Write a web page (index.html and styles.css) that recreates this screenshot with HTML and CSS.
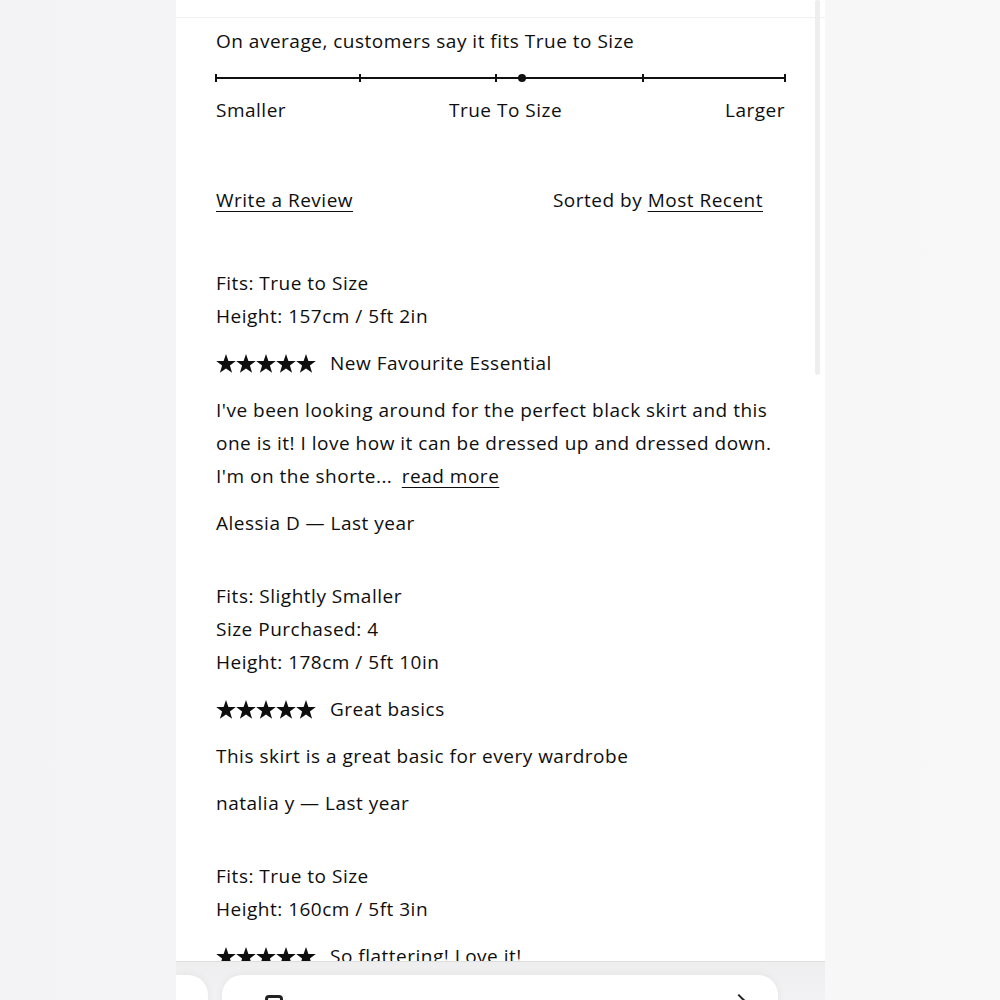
FILE: index.html
```html
<!DOCTYPE html>
<html lang="en">
<head>
<meta charset="utf-8">
<title>Reviews</title>
<link rel="stylesheet" href="styles.css">
</head>
<body>
<svg width="0" height="0" class="defs" aria-hidden="true">
  <defs>
    <symbol id="star" viewBox="0 0 20 19">
      <polygon points="10,0 12.4,6.9 19.8,7 13.9,11.5 16.1,18.7 10,14.4 3.9,18.7 6.1,11.5 0.2,7 7.6,6.9"/>
    </symbol>
  </defs>
</svg>
<div class="page">
  <main class="sheet">
    <div class="sheet-top"></div>
    <div class="sheet-body">
      <section class="fit-summary">
        <p class="line">On average, customers say it fits True to Size</p>
        <div class="scale">
          <div class="scale-track"></div>
          <span class="tick" style="left:0%"></span>
          <span class="tick" style="left:25.3%"></span>
          <span class="tick" style="left:49.2%"></span>
          <span class="tick" style="left:75%"></span>
          <span class="tick" style="left:100%"></span>
          <span class="marker" style="left:53.8%"></span>
        </div>
        <div class="scale-labels">
          <span>Smaller</span>
          <span class="mid">True To Size</span>
          <span>Larger</span>
        </div>
      </section>

      <div class="actions">
        <a class="link" href="#">Write a Review</a>
        <span class="sort">Sorted by <a class="link" href="#">Most Recent</a></span>
      </div>

      <article class="review">
        <div class="meta">
          <p class="line">Fits: True to Size</p>
          <p class="line">Height: 157cm / 5ft 2in</p>
        </div>
        <div class="headline">
          <span class="stars"><svg><use href="#star"/></svg><svg><use href="#star"/></svg><svg><use href="#star"/></svg><svg><use href="#star"/></svg><svg><use href="#star"/></svg></span>
          <span>New Favourite Essential</span>
        </div>
        <p class="body">I've been looking around for the perfect black skirt and this one is it! I love how it can be dressed up and dressed down. I'm on the shorte... <a class="link more" href="#">read more</a></p>
        <p class="line author">Alessia D — Last year</p>
      </article>

      <article class="review">
        <div class="meta">
          <p class="line">Fits: Slightly Smaller</p>
          <p class="line">Size Purchased: 4</p>
          <p class="line">Height: 178cm / 5ft 10in</p>
        </div>
        <div class="headline">
          <span class="stars"><svg><use href="#star"/></svg><svg><use href="#star"/></svg><svg><use href="#star"/></svg><svg><use href="#star"/></svg><svg><use href="#star"/></svg></span>
          <span>Great basics</span>
        </div>
        <p class="body">This skirt is a great basic for every wardrobe</p>
        <p class="line author">natalia y — Last year</p>
      </article>

      <article class="review">
        <div class="meta">
          <p class="line">Fits: True to Size</p>
          <p class="line">Height: 160cm / 5ft 3in</p>
        </div>
        <div class="headline">
          <span class="stars"><svg><use href="#star"/></svg><svg><use href="#star"/></svg><svg><use href="#star"/></svg><svg><use href="#star"/></svg><svg><use href="#star"/></svg></span>
          <span>So flattering! Love it!</span>
        </div>
      </article>
    </div>
    <div class="scrollbar"></div>
  </main>

  <nav class="tabbar">
    <div class="tab tab-prev"></div>
    <div class="tab tab-current">
      <span class="tab-icon"></span>
      <span class="tab-chevron"></span>
    </div>
  </nav>
</div>
</body>
</html>
```

FILE: styles.css
```css
* {
  box-sizing: border-box;
}

html, body {
  margin: 0;
  padding: 0;
}

body {
  background: #f4f4f6;
  font-family: "Open Sans", "Liberation Sans", sans-serif;
  color: #0e0e0e;
  font-size: 19px;
  letter-spacing: 0.5px;
  width: 1000px;
  height: 1000px;
  overflow: hidden;
}

.defs {
  position: absolute;
}

.page {
  display: flex;
  flex-direction: column;
  height: 1000px;
  overflow: hidden;
  background: linear-gradient(90deg, #f3f3f5 0%, #f6f6f8 50%, #f8f8f9 100%);
}

p {
  margin: 0;
}

.line {
  line-height: 33px;
}

/* White content column */
.sheet {
  position: relative;
  flex-shrink: 0;
  margin-left: 176px;
  width: 649px;
  height: 962px;
  background: #fff;
  border-bottom: 1px solid #dedede;
  overflow: hidden;
}

.sheet-top {
  height: 18px;
  border-bottom: 1px solid #f0f0f0;
}

.sheet-body {
  padding: 7px 40px 0 40px;
}

.scrollbar {
  position: absolute;
  top: 0;
  left: 639px;
  width: 5px;
  height: 375px;
  border-radius: 3px;
  background: #eeeeee;
}

/* Fit scale */
.scale {
  position: relative;
  height: 20px;
  margin-top: 10px;
}

.scale-track {
  position: absolute;
  left: 0;
  right: 0;
  top: 9px;
  height: 2px;
  background: #111;
}

.tick {
  position: absolute;
  top: 6px;
  width: 2px;
  height: 8px;
  margin-left: -1px;
  background: #111;
}

.marker {
  position: absolute;
  top: 6px;
  width: 8px;
  height: 8px;
  margin-left: -4px;
  border-radius: 50%;
  background: #111;
}

.scale-labels {
  display: flex;
  justify-content: space-between;
  line-height: 33px;
  margin-top: 6px;
}

/* Write / sort row */
.actions {
  display: flex;
  justify-content: space-between;
  line-height: 33px;
  margin-top: 57px;
  padding-right: 22px;
}

.link {
  color: inherit;
  text-decoration: underline;
  text-decoration-thickness: 1px;
  text-underline-offset: 4px;
}

.more {
  margin-left: 4px;
}

/* Reviews */
.review {
  margin-top: 50px;
  display: flex;
  flex-direction: column;
  gap: 14px;
}

.review + .review {
  margin-top: 40px;
}

.headline {
  display: flex;
  align-items: center;
  gap: 14px;
  line-height: 33px;
}

.stars {
  display: flex;
  gap: 0;
}

.stars svg {
  width: 20px;
  height: 19px;
  fill: #0e0e0e;
}

.body {
  line-height: 33px;
}

/* Bottom tab strip */
.tabbar {
  flex: 1;
  min-height: 0;
  display: flex;
  align-items: flex-start;
  padding-top: 13px;
  gap: 14px;
  margin-left: 176px;
  width: 649px;
  overflow: hidden;
  background: linear-gradient(180deg, #eeeeef 0%, #f2f2f4 100%);
}

.tab {
  flex-shrink: 0;
  height: 60px;
  background: #fff;
  border-radius: 20px;
  box-shadow: 0 0 8px rgba(0, 0, 0, 0.06);
}

.tab-prev {
  width: 32px;
  border-radius: 0 20px 20px 0;
}

.tab-current {
  position: relative;
  width: 556px;
}

.tab-icon {
  position: absolute;
  left: 43px;
  top: 20px;
  width: 18px;
  height: 16px;
  border: 3px solid #222;
  border-radius: 4px;
}

.tab-chevron {
  position: absolute;
  left: 512px;
  top: 21px;
  width: 10px;
  height: 10px;
  border-top: 2px solid #222;
  border-right: 2px solid #222;
  transform: rotate(45deg);
}
```
